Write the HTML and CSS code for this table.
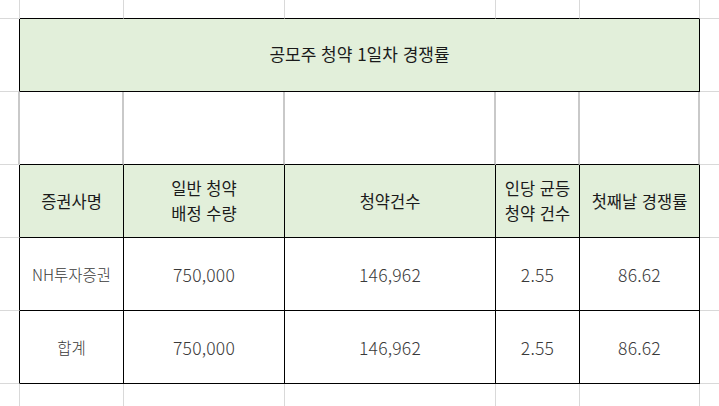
FILE: index.html
```html
<!DOCTYPE html>
<html lang="ko">
<head>
<meta charset="utf-8">
<title>공모주 청약 1일차 경쟁률</title>
<link rel="stylesheet" href="styles.css">
</head>
<body>
<div class="sheet">
  <!-- row 0 -->
  <div class="c"></div>
  <div class="c top"></div>
  <div class="c top"></div>
  <div class="c top"></div>
  <div class="c top"></div>
  <div class="c top"></div>
  <div class="c edge"></div>

  <!-- row 1: title -->
  <div class="c lead"></div>
  <div class="c title">공모주 청약 1일차 경쟁률</div>
  <div class="c edge"></div>

  <!-- row 2: empty -->
  <div class="c thick"></div>
  <div class="c thick gap"></div>
  <div class="c thick gap"></div>
  <div class="c thick gap"></div>
  <div class="c thick gap"></div>
  <div class="c thick gap"></div>
  <div class="c edge"></div>

  <!-- row 3: header -->
  <div class="c lead"></div>
  <div class="c box head">증권사명</div>
  <div class="c box head">일반 청약<br>배정 수량</div>
  <div class="c box head">청약건수</div>
  <div class="c box head">인당 균등<br>청약 건수</div>
  <div class="c box head">첫째날 경쟁률</div>
  <div class="c edge"></div>

  <!-- row 4 -->
  <div class="c lead"></div>
  <div class="c box txt">NH투자증권</div>
  <div class="c box num">750,000</div>
  <div class="c box num">146,962</div>
  <div class="c box num">2.55</div>
  <div class="c box num">86.62</div>
  <div class="c edge"></div>

  <!-- row 5 -->
  <div class="c lead"></div>
  <div class="c box txt">합계</div>
  <div class="c box num">750,000</div>
  <div class="c box num">146,962</div>
  <div class="c box num">2.55</div>
  <div class="c box num">86.62</div>
  <div class="c edge"></div>

  <!-- row 6 -->
  <div class="c last"></div>
  <div class="c last"></div>
  <div class="c last"></div>
  <div class="c last"></div>
  <div class="c last"></div>
  <div class="c last"></div>
  <div class="c last edge"></div>
</div>
</body>
</html>
```

FILE: styles.css
```css
html, body {
  margin: 0;
  padding: 0;
  background: #ffffff;
}

.sheet {
  display: grid;
  grid-template-columns: 20px 104px 161px 211px 84px 120px 1fr;
  grid-template-rows: 19px 73px 73px 73px 73px 73px 1fr;
  width: 719px;
  height: 406px;
  font-family: "Noto Sans CJK KR", "Noto Sans", sans-serif;
}

.c {
  box-sizing: border-box;
  border-right: 1px solid #d9d9d9;
  border-bottom: 1px solid #d9d9d9;
  display: flex;
  align-items: center;
  justify-content: center;
  text-align: center;
}

.edge {
  border-right: none;
}

.top {
  border-bottom-color: #000;
}

.lead {
  border-right-color: #000;
}

.title {
  grid-column: span 5;
  background: #e2efda;
  border-right-color: #000;
  border-bottom-color: #000;
  font-size: 17px;
  color: #1a1a1a;
  padding-bottom: 3px;
}

.thick {
  border-right: 2px solid #c9c9c9;
}

.gap {
  border-bottom-color: #000;
}

.box {
  border-right-color: #000;
  border-bottom-color: #000;
}

.head {
  background: #e2efda;
  font-size: 16.5px;
  line-height: 25px;
  color: #1a1a1a;
}

.txt {
  font-size: 15.5px;
  font-weight: 300;
  color: #3a3a3a;
}

.num {
  font-size: 17.5px;
  font-weight: 300;
  letter-spacing: 0.2px;
  color: #3a3a3a;
}

.last {
  border-bottom: none;
}
```
